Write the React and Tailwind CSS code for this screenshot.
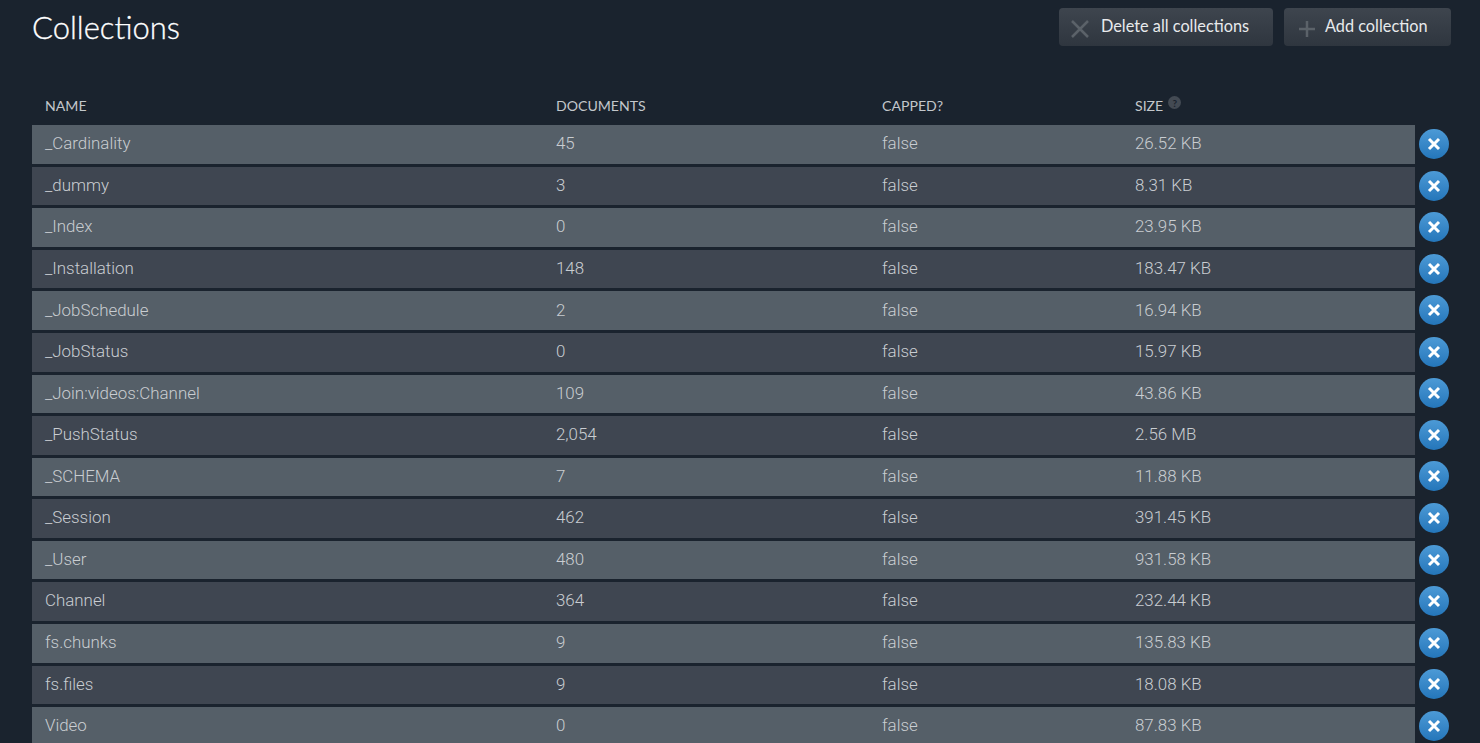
import React from 'react';

const rows = [
    { name: '_Cardinality', docs: '45', size: '26.52 KB' },
    { name: '_dummy', docs: '3', size: '8.31 KB' },
    { name: '_Index', docs: '0', size: '23.95 KB' },
    { name: '_Installation', docs: '148', size: '183.47 KB' },
    { name: '_JobSchedule', docs: '2', size: '16.94 KB' },
    { name: '_JobStatus', docs: '0', size: '15.97 KB' },
    { name: '_Join:videos:Channel', docs: '109', size: '43.86 KB' },
    { name: '_PushStatus', docs: '2,054', size: '2.56 MB' },
    { name: '_SCHEMA', docs: '7', size: '11.88 KB' },
    { name: '_Session', docs: '462', size: '391.45 KB' },
    { name: '_User', docs: '480', size: '931.58 KB' },
    { name: 'Channel', docs: '364', size: '232.44 KB' },
    { name: 'fs.chunks', docs: '9', size: '135.83 KB' },
    { name: 'fs.files', docs: '9', size: '18.08 KB' },
    { name: 'Video', docs: '0', size: '87.83 KB' },
];

function App() {
    return (
        <div className="h-[743px] overflow-hidden bg-[#1a232e] pl-[32px] pr-[29px] font-['Roboto',sans-serif]">
            {/* Header */}
            <div className="flex items-start justify-between h-[86px] pt-[8px]">
                <h1 className="text-[31px] leading-[38px] text-white font-['Lato',sans-serif] font-light [-webkit-text-stroke:0.3px_#fff]">Collections</h1>
                <div className="flex gap-[11px]">
                    <button className="flex items-center w-[214px] h-[38px] pl-[12px] pb-[2px] rounded-[4px] bg-gradient-to-b from-[#3e454e] to-[#2f363f] text-[16.3px] text-[#e8eaec] font-['Lato',sans-serif]">
                        <svg width="18" height="18" viewBox="0 0 18 18" className="mr-[12px] mt-[5px]">
                            <path d="M1 1 L17 17 M17 1 L1 17" stroke="#5b6269" strokeWidth="2.5" />
                        </svg>
                        Delete all collections
                    </button>
                    <button className="flex items-center w-[167px] h-[38px] pl-[15px] pb-[2px] rounded-[4px] bg-gradient-to-b from-[#3e454e] to-[#2f363f] text-[16.3px] text-[#e8eaec] font-['Lato',sans-serif]">
                        <svg width="16" height="16" viewBox="0 0 16 16" className="mr-[10px] mt-[5px]">
                            <path d="M8 0 V16 M0 8 H16" stroke="#5b6269" strokeWidth="2.5" />
                        </svg>
                        Add collection
                    </button>
                </div>
            </div>

            {/* Table head */}
            <div className="grid grid-cols-[511px_326px_253px_1fr] h-[39.2px] pl-[13px] pr-[36px] pb-[1px] items-center text-[14.1px] text-[#c3c7cb] font-['Lato',sans-serif]">
                <div>NAME</div>
                <div>DOCUMENTS</div>
                <div>CAPPED?</div>
                <div className="flex items-center">
                    SIZE
                    <span className="ml-[5px] mb-[5px] flex items-center justify-center w-[13px] h-[13px] rounded-full bg-[#434a53] text-[10px] leading-none font-bold text-[#1a232e]">?</span>
                </div>
            </div>

            {/* Rows */}
            <div>
                {rows.map((row, index) => (
                    <div key={row.name} className="flex items-center mb-[3px]">
                        <div className={`grid grid-cols-[511px_326px_253px_1fr] items-center flex-1 h-[38.57px] pl-[13px] pb-[1px] text-[16.9px] font-light text-[#c9cdd1] ${index % 2 === 0 ? 'bg-[#555f68]' : 'bg-[#3f4651]'}`}>
                            <div>{row.name}</div>
                            <div>{row.docs}</div>
                            <div>false</div>
                            <div>{row.size}</div>
                        </div>
                        <button className="ml-[4px] mr-[2px] mb-[1px] flex items-center justify-center w-[30px] h-[30px] rounded-full bg-gradient-to-b from-[#4c9ad6] to-[#2476ba]">
                            <svg width="14" height="14" viewBox="0 0 14 14">
                                <path d="M2 2 L12 12 M12 2 L2 12" stroke="#fff" strokeWidth="3" />
                            </svg>
                        </button>
                    </div>
                ))}
            </div>
        </div>
    );
}

export default App;
